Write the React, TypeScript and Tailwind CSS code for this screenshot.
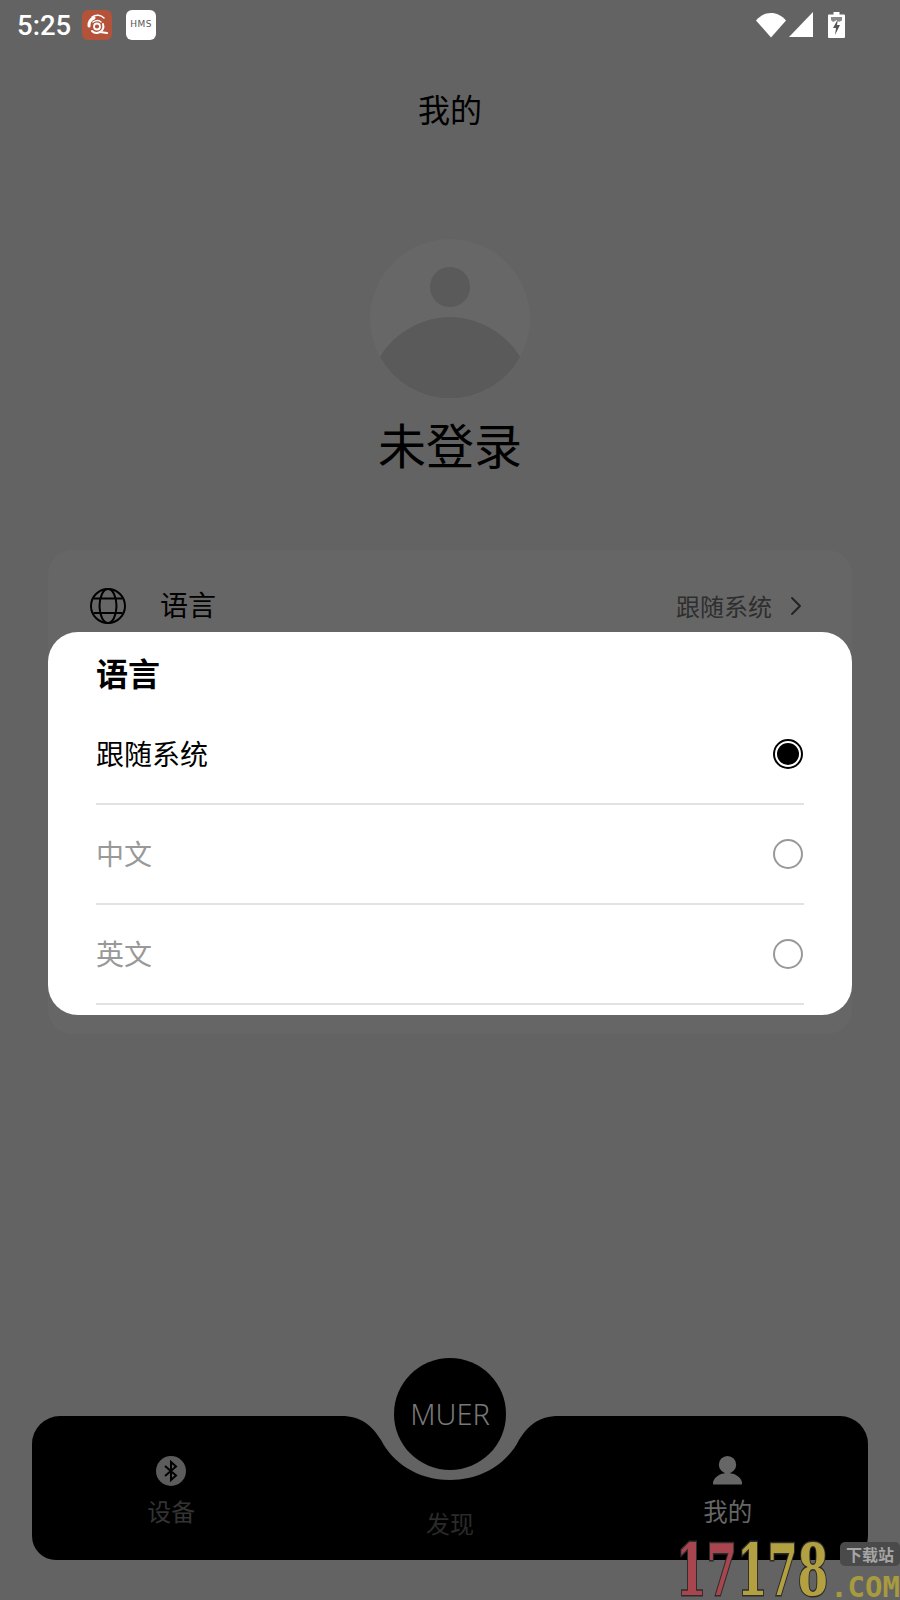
import { ChevronRight } from 'lucide-react';

const cjk = "font-['Noto_Sans_CJK_SC','Noto_Sans',sans-serif]";

const options = [
  { label: '跟随系统', selected: true },
  { label: '中文', selected: false },
  { label: '英文', selected: false },
];

function StatusBar() {
  return (
    <div className="flex h-12 items-center justify-between pl-[17px] pr-[55px] pt-[1px]">
      <div className="flex items-center">
        <span className="mt-[3px] w-[65px] font-['Roboto',sans-serif] text-[27.500px] font-medium leading-none text-white">5:25</span>
        <div className="flex h-[30px] w-[30px] items-center justify-center rounded-[6px] bg-[#b5523a]">
          <svg width="26" height="26" viewBox="0 0 26 26" fill="none" stroke="#fff" strokeLinecap="round">
            <circle cx="13" cy="14.500" r="3" strokeWidth="1.800" />
            <path d="M5 14a8 8 0 0 1 5-8" strokeWidth="3" />
            <path d="M8 5c4-3 9-2 12 1" strokeWidth="1.500" />
            <path d="M9 10c3-2 6-2 8 0" strokeWidth="1.500" />
            <path d="M19 12a7 7 0 0 1-3 8c-3 1.500-6 1-8-1" strokeWidth="2" />
            <path d="M16 20l7 1" strokeWidth="2" />
          </svg>
        </div>
        <div className="ml-[14px] flex h-[30px] w-[30px] items-center justify-center rounded-[6px] bg-white font-['DejaVu_Sans',sans-serif] text-[9px] font-medium tracking-[0.5px] text-[#555]">
          HMS
        </div>
      </div>
      <div className="flex items-center">
        <svg width="30" height="26" viewBox="0 0 30 26" fill="#fff">
          <path d="M0 8.500C8-1.500 22-1.500 30 8.500L15 25.500Z" />
        </svg>
        <svg className="ml-[3px]" width="24" height="25" viewBox="0 0 24 25" fill="#fff">
          <path d="M24 0V25H0Z" />
        </svg>
        <svg className="ml-[15px]" width="17" height="26" viewBox="0 0 17 26">
          <path d="M5.500 0H11.500V2.500H16A1 1 0 0 1 17 3.500V25A1 1 0 0 1 16 26H1A1 1 0 0 1 0 25V3.500A1 1 0 0 1 1 2.500H5.500Z" fill="#fff" />
          <path d="M3 5H14V8.500L11 10 9 8 5 10 3 8Z" fill="#8a8a8a" />
          <path d="M10 7L5 16H8L7 23 12 13H9Z" fill="#555" />
        </svg>
      </div>
    </div>
  );
}

function Avatar() {
  return (
    <svg width="160" height="160" viewBox="0 0 160 160">
      <circle cx="80" cy="80" r="80" fill="#676767" />
      <circle cx="80" cy="48" r="20" fill="#5a5a5a" />
      <path d="M10 118C25 92 55 78 80 78S135 92 150 118A80 80 0 0 1 10 118Z" fill="#5a5a5a" />
    </svg>
  );
}

function GlobeIcon() {
  return (
    <svg width="36" height="36" viewBox="0 0 36 36" fill="none" stroke="#000" strokeWidth="2">
      <circle cx="18" cy="18" r="17" />
      <ellipse cx="18" cy="18" rx="8.500" ry="17" />
      <path d="M3.500 10.500H32.500M3.500 25H32.500" />
    </svg>
  );
}

function LanguageDialog() {
  return (
    <div className={`absolute left-[48px] top-[632px] h-[383px] w-[804px] overflow-hidden rounded-[30px] bg-white ${cjk}`}>
      <div className="flex h-[73px] items-center pl-[48px] pt-[7px] text-[32px] font-bold leading-none text-black">语言</div>
      <div className="mx-[48px]">
        {options.map((option) => (
          <div key={option.label} className="flex h-[100px] items-center justify-between border-b-2 border-[#e2e2e2]">
            <span className={`mb-[2px] text-[28px] leading-none ${option.selected ? 'text-black' : 'text-[#999]'}`}>{option.label}</span>
            {option.selected ? (
              <div className="mr-[1px] flex h-[30px] w-[30px] items-center justify-center rounded-full border-2 border-black">
                <div className="h-[22px] w-[22px] rounded-full bg-black" />
              </div>
            ) : (
              <div className="mr-[1px] h-[30px] w-[30px] rounded-full border-2 border-[#999]" />
            )}
          </div>
        ))}
      </div>
    </div>
  );
}

function BottomNav() {
  return (
    <div className={`relative mx-[32px] mb-[40px] mt-auto h-[144px] ${cjk}`}>
      <svg className="absolute inset-0" width="836" height="144" viewBox="0 0 836 144" fill="#000">
        <path d="M28 0H309C330 0 340 10 349 24C360 46 385 64 418 64S476 46 487 24C496 10 506 0 527 0H808A28 28 0 0 1 836 28V120A24 24 0 0 1 812 144H24A24 24 0 0 1 0 120V28A28 28 0 0 1 28 0Z" />
      </svg>
      <div className="absolute left-[362px] top-[-58px] flex h-[112px] w-[112px] items-center justify-center rounded-full bg-black pb-[2px] font-['Noto_Sans',sans-serif] text-[29px] font-light leading-none text-[#787878]">
        MUER
      </div>
      <div className="relative grid h-full grid-cols-3">
        <div className="flex flex-col items-center pt-[40px]">
          <div className="flex h-[30px] w-[30px] items-center justify-center rounded-full bg-[#5c5c5c]">
            <svg width="18" height="22" viewBox="0 0 18 22" fill="none" stroke="#000" strokeWidth="2">
              <path d="M3 6L14 15.500L9 20V2L14 6.500L3 16" />
            </svg>
          </div>
          <span className="mt-[8px] text-[24px] leading-[34px] text-[#333]">设备</span>
        </div>
        <div className="flex flex-col items-center pt-[90px]">
          <span className="text-[24px] leading-[34px] text-[#2a2a2a]">发现</span>
        </div>
        <div className="flex flex-col items-center pt-[39px] pr-[2px]">
          <svg width="29" height="30" viewBox="0 0 30 30" fill="#666">
            <circle cx="15" cy="9.500" r="9" />
            <path d="M1 30C-1 30 0 27 1 25C4 20 10 18 15 18S26 20 29 25C30 27 31 30 29 30Z" />
          </svg>
          <span className="mt-[9px] text-[24.500px] leading-[34px] text-[#666]">我的</span>
        </div>
      </div>
    </div>
  );
}

function Watermark() {
  return (
    <div className="absolute bottom-0 right-0 h-[60px] w-[224px]">
      <div className="absolute right-[72px] top-[2px] origin-right scale-x-[0.615] whitespace-nowrap font-['DejaVu_Serif',serif] text-[71px] font-bold leading-[56px] [-webkit-text-stroke:3px_#2c2c2c] [paint-order:stroke_fill]">
        <span className="text-[#a9454f]">17</span>
        <span className="text-[#b3a041]">178</span>
      </div>
      <div className="absolute right-0 top-[2px] flex h-[24px] w-[60px] items-center justify-center rounded-[5px] bg-[#4a4a4a] font-['Noto_Sans_CJK_SC',sans-serif] text-[16px] font-bold leading-none text-[#a5a5a5]">
        下载站
      </div>
      <div className="absolute right-0 top-[35px] font-['DejaVu_Sans_Mono',monospace] text-[29px] font-bold leading-[24px] text-[#a89a3e]">
        .COM
      </div>
    </div>
  );
}

export default function App() {
  return (
    <div className="relative flex h-[1600px] w-[900px] flex-col overflow-hidden bg-[#636363]">
      <StatusBar />
      <div className={`mt-[40px] text-center text-[32px] leading-10 text-black ${cjk}`}>我的</div>

      <div className="mt-[111px] flex justify-center">
        <Avatar />
      </div>
      <div className={`mt-[11px] text-center text-[48px] leading-[66px] text-black ${cjk}`}>未登录</div>

      {/* Settings card, mostly covered by the dialog */}
      <div className={`mx-[48px] mt-[74px] h-[484px] rounded-[24px] bg-[#666] ${cjk}`}>
        <div className="flex h-[112px] items-center pl-[42px] pr-[40px]">
          <GlobeIcon />
          <span className="mb-[4px] ml-[34px] text-[28px] leading-none text-black">语言</span>
          <span className="ml-auto text-[24px] leading-none text-[#2e2e2e]">跟随系统</span>
          <ChevronRight className="ml-[8px] h-[32px] w-[32px] text-[#222]" strokeWidth={1.400} />
        </div>
      </div>

      <LanguageDialog />
      <BottomNav />
      <Watermark />
    </div>
  );
}
